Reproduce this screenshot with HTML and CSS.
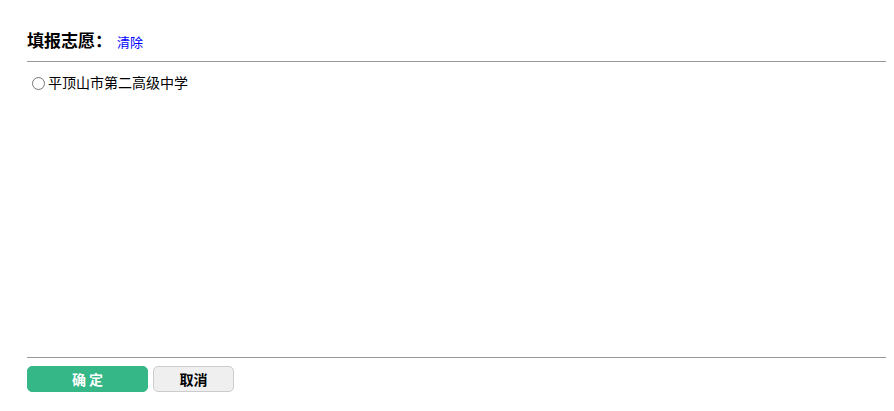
FILE: index.html
```html
<!DOCTYPE html>
<html lang="zh-CN">

<head>
    <meta charset="UTF-8">
    <meta name="viewport" content="width=device-width, initial-scale=1.0">
    <title>填报志愿</title>
    <link rel="stylesheet" href="styles.css">
</head>

<body>
    <div class="dialog">
        <div class="title">
            <span class="title-text">填报志愿：</span>
            <a class="clear" href="#">清除</a>
        </div>

        <ul class="options">
            <li>
                <label><input type="radio" name="school">平顶山市第二高级中学</label>
            </li>
        </ul>

        <div class="footer">
            <button class="btn btn-ok">确 定</button>
            <button class="btn btn-cancel">取消</button>
        </div>
    </div>
</body>

</html>
```

FILE: styles.css
```css
* {
    margin: 0;
    padding: 0;
}

body {
    font-family: "Noto Sans CJK SC", "Microsoft YaHei", sans-serif;
    font-size: 14px;
    color: #000;
    background: #fff;
}

.dialog {
    padding: 26px 8px 0 27px;
}

.title {
    display: flex;
    align-items: baseline;
    height: 35px;
    border-bottom: 1px solid #999;
}

.title-text {
    font-size: 17px;
    font-weight: 700;
    line-height: 28px;
}

.clear {
    margin-left: 5px;
    font-size: 13px;
    color: #00f;
    text-decoration: none;
}

.options {
    height: 285px;
    padding-top: 10px;
    list-style: none;
}

.options li {
    line-height: 20px;
}

.options input {
    margin: 0 3px 0 5px;
    vertical-align: -2px;
    accent-color: #333;
}

.footer {
    display: flex;
    gap: 5px;
    padding-top: 8px;
    border-top: 1px solid #999;
}

.btn {
    height: 26px;
    border-radius: 5px;
    font-family: inherit;
    font-size: 14px;
    font-weight: 700;
    cursor: pointer;
}

.btn-ok {
    width: 121px;
    background: #35b788;
    border: 1px solid #35b788;
    color: #fff;
}

.btn-cancel {
    width: 81px;
    background: #efefef;
    border: 1px solid #ccc;
    color: #000;
}
```
